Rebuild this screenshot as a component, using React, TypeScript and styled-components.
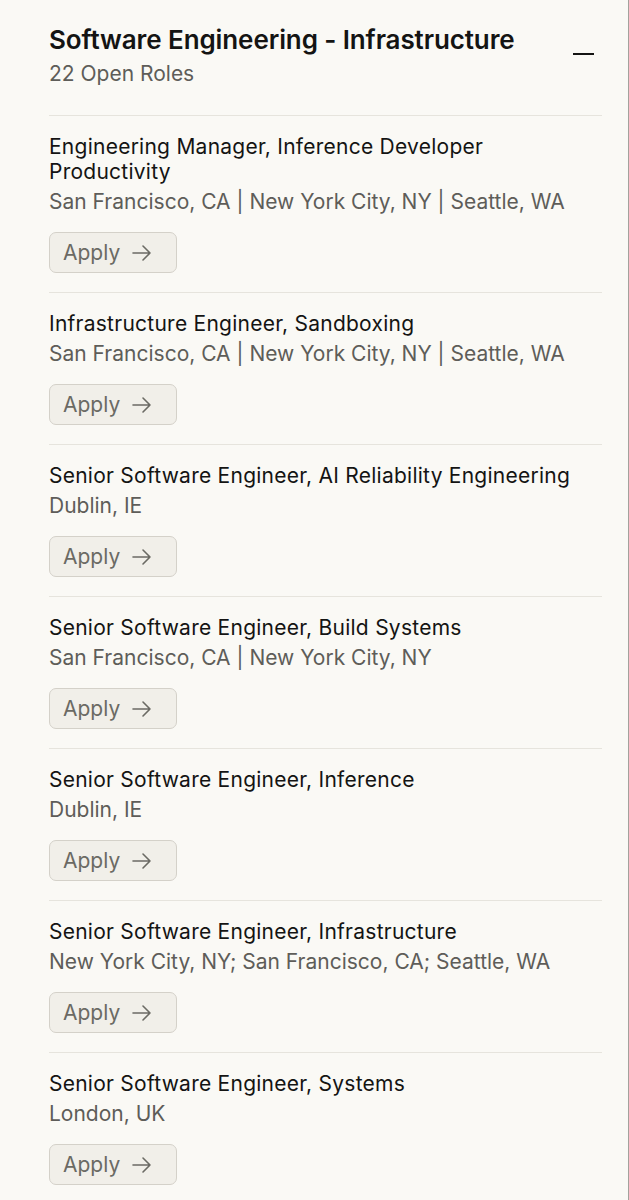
import React from 'react'
import styled, {createGlobalStyle} from 'styled-components'

const GlobalStyle = createGlobalStyle`
  html, body {
    margin: 0;
    padding: 0;
    background: #FAF9F5;
  }
`

const Page = styled.div`
  width: 629px;
  min-height: 1200px;
  box-sizing: border-box;
  background: #FAF9F5;
  border-right: 1px solid #A3A29C;
  padding: 0 26px 0 49px;
  font-family: 'Inter', 'Liberation Sans', sans-serif;
  color: #141413;
`

const Header = styled.div`
  display: flex;
  justify-content: space-between;
  align-items: flex-start;
  padding: 25px 0 28px;
  border-bottom: 1px solid #E6E4DD;
`

const HeaderText = styled.div`
  display: flex;
  flex-direction: column;
  gap: 6px;
`

const Title = styled.h2`
  margin: 0;
  font-size: 26px;
  line-height: 30px;
  font-weight: 600;
  letter-spacing: -0.1px;
`

const Count = styled.div`
  font-size: 21px;
  line-height: 26px;
  color: #5E5D59;
`

const Collapse = styled.button`
  margin: 28px 8px 0 0;
  width: 21px;
  height: 2px;
  padding: 0;
  border: none;
  background: #141413;
`

const Role = styled.div`
  padding: 18px 0 19px;
  border-bottom: 1px solid #E6E4DD;
`

const RoleTitle = styled.div`
  font-size: 21px;
  line-height: 25px;
  letter-spacing: 0.25px;
  padding-right: 10px;
`

const Location = styled.div`
  margin-top: 5px;
  font-size: 21px;
  line-height: 25px;
  color: #5E5D59;
`

const ApplyButton = styled.button`
  margin-top: 18px;
  height: 41px;
  box-sizing: border-box;
  display: inline-flex;
  align-items: center;
  gap: 11px;
  padding: 0 24px 0 13px;
  border: 1.5px solid #D4D1C9;
  border-radius: 7px;
  background: #F1EFE9;
  color: #6B6A64;
  font-family: inherit;
  font-size: 21px;
`

const roles = [
  {title: 'Engineering Manager, Inference Developer Productivity', location: 'San Francisco, CA | New York City, NY | Seattle, WA'},
  {title: 'Infrastructure Engineer, Sandboxing', location: 'San Francisco, CA | New York City, NY | Seattle, WA'},
  {title: 'Senior Software Engineer, AI Reliability Engineering', location: 'Dublin, IE'},
  {title: 'Senior Software Engineer, Build Systems', location: 'San Francisco, CA | New York City, NY'},
  {title: 'Senior Software Engineer, Inference', location: 'Dublin, IE'},
  {title: 'Senior Software Engineer, Infrastructure', location: 'New York City, NY; San Francisco, CA; Seattle, WA'},
  {title: 'Senior Software Engineer, Systems', location: 'London, UK'},
]

const Arrow = () => (
  <svg width="21" height="20" viewBox="0 0 21 20" fill="none" stroke="currentColor" strokeWidth="1.6" strokeLinecap="round" strokeLinejoin="round">
    <path d="M2 10h17M12 3l7 7-7 7"/>
  </svg>
)

const App: React.FC = () => (
  <>
    <GlobalStyle/>
    <Page>
      <Header>
        <HeaderText>
          <Title>Software Engineering - Infrastructure</Title>
          <Count>22 Open Roles</Count>
        </HeaderText>
        <Collapse aria-label="Collapse"/>
      </Header>
      {roles.map(r => (
        <Role key={r.title}>
          <RoleTitle>{r.title}</RoleTitle>
          <Location>{r.location}</Location>
          <ApplyButton>Apply <Arrow/></ApplyButton>
        </Role>
      ))}
    </Page>
  </>
)

export default App
